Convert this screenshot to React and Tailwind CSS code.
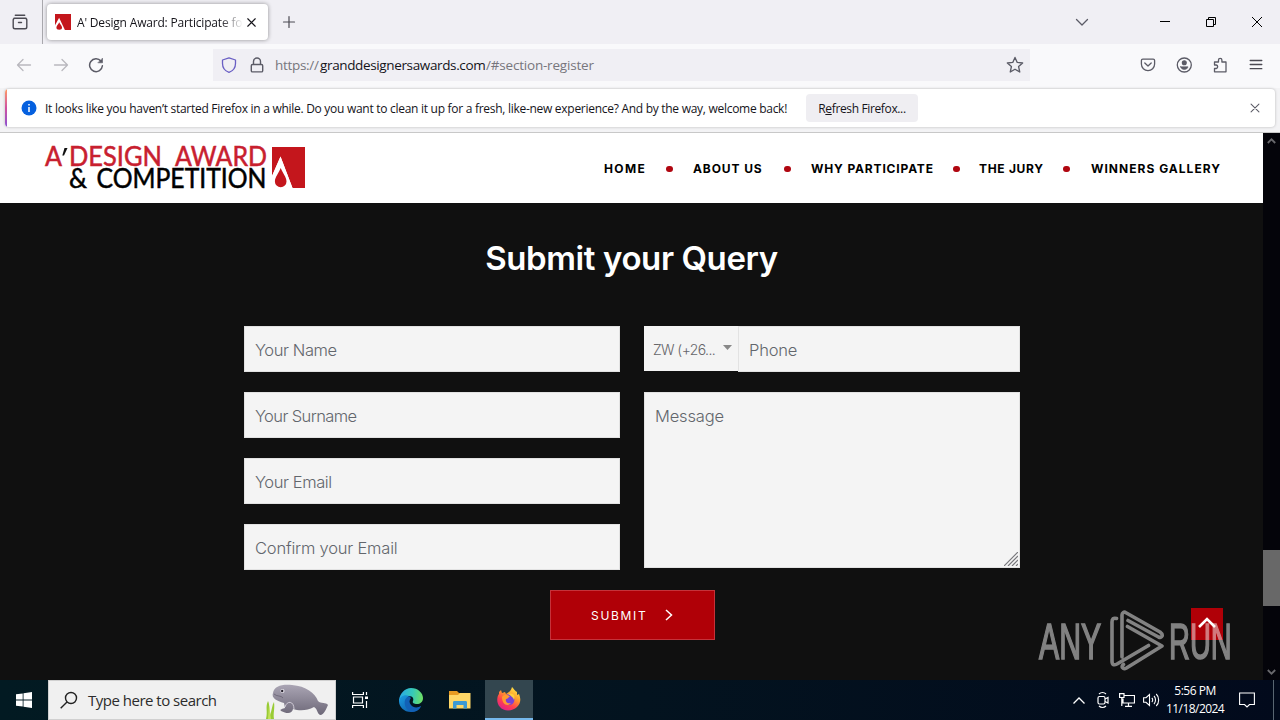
import React from "react";

const ui = "font-['Open_Sans','Noto_Sans',sans-serif]";

function Icon({ className = "", size = 16, w = 1.3, children }) {
  return (
    <svg className={`shrink-0 ${className}`} width={size} height={size} viewBox="0 0 16 16" fill="none" stroke="currentColor" strokeWidth={w} strokeLinecap="round" strokeLinejoin="round">
      {children}
    </svg>
  );
}

function AwardMark({ className }) {
  return (
    <svg className={className} viewBox="0 0 33 41" preserveAspectRatio="none">
      <path d="M0 0H33V41H20.500L8.500 9.500L0 29Z" fill="#c4161c" />
      <path d="M8.500 9.500L20.500 41H0V29Z" fill="#fff" />
      <path d="M8.700 21C10.500 26 14.500 30 14.500 34.500A5.800 5.800 0 0 1 2.900 34.500C2.900 30 6.900 26 8.700 21Z" fill="#c4161c" />
    </svg>
  );
}

function TabBar() {
  return (
    <div className="flex h-11 items-start bg-[#f0eff4] text-[#15141a]">
      <div className="flex h-11 w-[43px] items-center border-r border-[#a9a8ad] pl-3">
        <Icon size={16} w={1.4} className="text-[#4b4a52]">
          <path d="M3.300 1.200H12.700M2 4.300H14M1.200 6V13C1.200 14 2 14.800 3 14.800H13C14 14.800 14.800 14 14.800 13V6C14.800 5 14 4.200 13 4.200H3C2 4.200 1.200 5 1.200 6ZM6.500 8.500H9.500" />
        </Icon>
      </div>
      <div className="mt-1 ml-1 flex h-9 w-[221px] items-center rounded bg-white pl-2 shadow-[0_0_4px_rgba(0,0,0,0.4)]">
        <div className="flex h-4 w-4 shrink-0 bg-[#b5000d]">
          <AwardMark className="h-4 w-4" />
        </div>
        <div className="mt-px ml-[6px] w-[166px] overflow-hidden text-xs tracking-[-0.18px] whitespace-nowrap [mask-image:linear-gradient(to_right,#000_86%,transparent)]">
          A&apos; Design Award: Participate for
        </div>
        <Icon size={15} w={1.2} className="ml-px"><path d="M4 4L12 12M12 4L4 12" /></Icon>
      </div>
      <Icon size={16} w={1.2} className="mt-[14px] ml-[13px] text-[#4b4a52]"><path d="M8 2.500V13.500M2.500 8H13.500" /></Icon>
      <div className="ml-auto flex h-11 items-center">
        <Icon size={16} w={1.3} className="mr-[70px] text-[#5b5b66]"><path d="M2.500 5.500L8 11L13.500 5.500" /></Icon>
        <svg className="mr-9 h-[10px] w-[10px]" viewBox="0 0 10 10" stroke="#000"><path d="M0 4.500H10" /></svg>
        <svg className="mr-9 h-[10px] w-[10px]" viewBox="0 0 10 10" fill="none" stroke="#000"><path d="M.5 2.500H7.500V9.500H.5ZM2.500 2.500V.5H9.500V7.500H7.500" /></svg>
        <svg className="mr-[18px] h-[10px] w-[10px]" viewBox="0 0 10 10" fill="none" stroke="#000"><path d="M0 0L10 10M10 0L0 10" /></svg>
      </div>
    </div>
  );
}

function AddressBar() {
  return (
    <div className="flex h-11 items-center bg-[#f9f9fb] pb-[2px] text-[#5b5b66]">
      <Icon className="ml-4 text-[#b9b8be]"><path d="M1.500 8H14.500M7 2.500L1.500 8L7 13.500" /></Icon>
      <Icon className="ml-[21px] text-[#b9b8be]"><path d="M1.500 8H14.500M9 2.500L14.500 8L9 13.500" /></Icon>
      <Icon className="ml-[19px]" w={1.500}>
        <path d="M13 4.200A6.400 6.400 0 1 0 14.400 8.800" />
        <path d="M14.500 1.500V5.800H10.200Z" fill="currentColor" strokeWidth=".6" />
      </Icon>
      <div className="ml-[109px] flex h-8 w-[817px] items-center bg-[#f0eff4]">
        <Icon size={16} w={1.300} className="ml-2 text-[#6a5fc4]">
          <path d="M8 .8L14.500 3V6.500C14.500 10.500 12 13.900 8 15.300C4 13.900 1.500 10.500 1.500 6.500V3Z" />
        </Icon>
        <Icon size={16} w={1.400} className="ml-3">
          <path d="M3.500 7.500H12.500C13.200 7.500 13.700 8 13.700 8.700V13.700C13.700 14.400 13.200 14.900 12.500 14.900H3.500C2.800 14.900 2.300 14.400 2.300 13.700V8.700C2.300 8 2.800 7.500 3.500 7.500ZM4.500 7.300V4.500A3.500 3.500 0 0 1 11.500 4.500V7.300" />
        </Icon>
        <div className={`ml-[10px] flex text-[13.500px] whitespace-nowrap text-[#77767d] ${ui}`}>
          <span className="w-[45px] tracking-[-0.3px]">https://</span>
          <span className="w-[166px] tracking-[-0.36px] text-[#15141a]">granddesignersawards.com</span>
          <span className="tracking-[-0.2px]">/#section-register</span>
        </div>
        <Icon size={18} w={1.200} className="mr-[6px] ml-auto">
          <path d="M8 1.300L10 5.700L14.800 6.200L11.200 9.400L12.200 14.200L8 11.800L3.800 14.200L4.800 9.400L1.200 6.200L6 5.700Z" />
        </Icon>
      </div>
      <div className="mr-4 ml-auto flex items-center gap-5">
        <Icon><path d="M2.800 2.200H13.200C14 2.200 14.600 2.800 14.600 3.600V7A6.600 6.600 0 0 1 1.400 7V3.600C1.400 2.800 2 2.200 2.800 2.200ZM4.800 6L8 9L11.200 6" /></Icon>
        <Icon>
          <circle cx="8.300" cy="8" r="7" />
          <circle cx="8.300" cy="5.700" r="1.900" fill="currentColor" />
          <path d="M4.600 9.800H12C11.600 11.600 10.100 12.500 8.300 12.500S5 11.600 4.600 9.800Z" fill="currentColor" strokeWidth=".6" />
        </Icon>
        <Icon><path d="M2.500 5H6.500V3A1.700 1.700 0 0 1 9.900 3V5H14V14.800H2.500V11.500H4.300A1.800 1.800 0 0 0 4.300 8H2.500Z" /></Icon>
        <Icon className="text-[#4b4a52]"><path d="M2.200 3.500H13.800M2.200 7.500H13.800M2.200 11.700H13.800" /></Icon>
      </div>
    </div>
  );
}

function Notification() {
  return (
    <div className="h-[45px] border-b border-[#c8c8c8] bg-[#f3f3f5] px-[5px] pt-px">
      <div className="flex h-[38px] items-center overflow-hidden rounded bg-white shadow-[0_0_3px_rgba(0,0,0,0.25)]">
        <div className="h-full w-[2px] bg-gradient-to-b from-[#ff9a5c] via-[#d04fa0] to-[#8a4fd0]" />
        <svg className="ml-[14px] h-4 w-4" viewBox="0 0 16 16">
          <circle cx="8" cy="8" r="7.500" fill="#0560df" />
          <path d="M8 7V12M8 4V5.500" stroke="#fff" strokeWidth="1.500" />
        </svg>
        <div className={`mt-[2px] ml-2 w-[761px] text-xs tracking-[-0.282px] whitespace-nowrap text-[#15141a] ${ui}`}>
          It looks like you haven’t started Firefox in a while. Do you want to clean it up for a fresh, like-new experience? And by the way, welcome back!
        </div>
        <button className={`flex h-7 w-28 items-center justify-center rounded bg-[#efeef2] pt-[2px] text-xs tracking-[-0.36px] whitespace-nowrap text-[#15141a] ${ui}`}>
          R<span className="underline">e</span>fresh Firefox...
        </button>
        <Icon size={14} w={1.200} className="mr-[13px] ml-auto text-[#5b5b66]"><path d="M3.500 3.500L12.500 12.500M12.500 3.500L3.500 12.500" /></Icon>
      </div>
    </div>
  );
}

function Logo() {
  return (
    <div className="ml-[44px] flex items-start">
      <svg className="overflow-visible" width="223" height="46" viewBox="0 0 223 46" fontFamily="Lato, sans-serif" fontSize="26" strokeWidth=".5">
        <g fill="#c8202f" stroke="#c8202f">
          <text x="1" y="19" textLength="17" lengthAdjust="spacingAndGlyphs">A</text>
          <text x="25" y="19" textLength="93" lengthAdjust="spacingAndGlyphs">DESIGN</text>
          <text x="131" y="19" textLength="92" lengthAdjust="spacingAndGlyphs">AWARD</text>
        </g>
        <path d="M20.500 1H23.500L20 8.500H18.300Z" fill="#111" />
        <g fill="#000" stroke="#000">
          <text x="25" y="41" textLength="18" lengthAdjust="spacingAndGlyphs">&amp;</text>
          <text x="52.500" y="41" textLength="170" lengthAdjust="spacingAndGlyphs">COMPETITION</text>
        </g>
      </svg>
      <AwardMark className="ml-[5px] h-[41px] w-[33px]" />
    </div>
  );
}

const Dot = ({ className }) => <span className={`h-[6px] w-[7px] shrink-0 rounded-full bg-[#b00610] ${className}`} />;

function SiteHeader() {
  return (
    <header className="flex h-[70px] bg-white pt-[14px]">
      <Logo />
      <nav className="ml-[299px] flex h-11 items-center text-xs font-bold whitespace-nowrap text-black">
        <span className="w-[43px] tracking-[1.400px]">HOME</span>
        <Dot className="mx-[19px]" />
        <span className="ml-px w-[71px] tracking-[0.900px]">ABOUT US</span>
        <Dot className="ml-5" />
        <span className="ml-5 w-[122px] tracking-[0.840px]">WHY PARTICIPATE</span>
        <Dot className="ml-5" />
        <span className="ml-[19px] w-[63px] tracking-[0.700px]">THE JURY</span>
        <Dot className="ml-[21px]" />
        <span className="ml-[21px] tracking-[1.020px]">WINNERS GALLERY</span>
      </nav>
    </header>
  );
}

const field = "h-[46px] w-full border border-[#e2e2e2] bg-[#f4f4f4] px-[10px] pt-[2px] text-[16.500px] font-light placeholder-[#62666c]";

function QueryForm() {
  return (
    <main className="h-[477px] bg-[#101010] pt-[34px]">
      <h1 className="text-center text-[33px] leading-[42px] font-semibold tracking-[-0.4px] text-white">Submit your Query</h1>
      <div className="mt-[47px] ml-[244px] grid w-[776px] grid-cols-2 gap-6">
        <div className="flex flex-col gap-5">
          <input className={`tracking-[-0.400px] ${field}`} placeholder="Your Name" />
          <input className={`tracking-[-0.600px] ${field}`} placeholder="Your Surname" />
          <input className={`tracking-[-0.400px] ${field}`} placeholder="Your Email" />
          <input className={`tracking-[-0.200px] ${field}`} placeholder="Confirm your Email" />
        </div>
        <div className="flex flex-col gap-5">
          <div className="flex h-[46px]">
            <div className="flex h-[45px] w-[94px] shrink-0 items-center bg-[#f4f4f4] pt-[2px] pl-[9px] text-[14px] font-light tracking-[-0.600px] text-[#66666a]">
              <span className="w-[70px] whitespace-nowrap">ZW (+26...</span>
              <svg className="mb-[4px] h-[5px] w-[9px]" viewBox="0 0 9 5"><path d="M0 0H9L4.500 5Z" fill="#888" /></svg>
            </div>
            <input className={`min-w-0 flex-1 tracking-[-0.200px] ${field}`} placeholder="Phone" />
          </div>
          <div className="flex h-44 items-end border border-[#e2e2e2] bg-[#f4f4f4]">
            <textarea className="h-full flex-1 resize-none bg-transparent px-[10px] pt-[11px] text-[16.500px] font-light tracking-[-0.150px] placeholder-[#62666c]" placeholder="Message" />
            <svg className="mr-px mb-px -ml-[15px] h-[14px] w-[14px]" viewBox="0 0 14 14" stroke="#77777b" strokeWidth="1.200"><path d="M0 14L14 0M4 14L14 4M8 14L14 8M12 14L14 12" /></svg>
          </div>
        </div>
      </div>
      <button className="mt-5 ml-[550px] flex h-[50px] w-[165px] items-center border border-[#c5323a] bg-[#b00007] pl-10 text-xs tracking-[1.700px] text-white">
        <span className="mt-[2px] w-[71px] text-left">SUBMIT</span>
        <svg className="ml-[3px] h-3 w-2" viewBox="0 0 8 12" fill="none" stroke="#fff" strokeWidth="1.500"><path d="M1 1L6.500 6L1 11" /></svg>
      </button>
    </main>
  );
}

function ScrollBar() {
  return (
    <div className="flex h-[547px] w-[17px] flex-col items-center bg-[#04040a]">
      <svg className="mt-[5px] h-[6px] w-[9px]" viewBox="0 0 9 6" fill="none" stroke="#68686c" strokeWidth="1.800"><path d="M.8 5L4.500 1.300L8.200 5" /></svg>
      <div className="mt-[406px] h-[56px] w-full bg-[#686868]" />
      <svg className="mt-[63px] h-[6px] w-[9px]" viewBox="0 0 9 6" fill="none" stroke="#68686c" strokeWidth="1.800"><path d="M.8 1L4.500 4.700L8.200 1" /></svg>
    </div>
  );
}

function Watermark() {
  return (
    <div className="absolute top-[604px] left-[1036px] h-[72px] w-[200px]">
      <div className="absolute top-1 left-[155px] flex h-8 w-8 items-center justify-center bg-[#b00007]">
        <svg className="mt-[-4px] h-[11px] w-[18px]" viewBox="0 0 18 11" fill="none" stroke="#fff" strokeWidth="2.600"><path d="M1 10L9 2L17 10" /></svg>
      </div>
      <svg className="absolute inset-0 overflow-visible opacity-50" width="200" height="72" viewBox="0 0 200 72" fill="none" stroke="#f4f4f4">
        <g fontFamily="'Liberation Sans', sans-serif" fontSize="50" fill="#f4f4f4" strokeWidth="1.600">
          <text transform="translate(3 54.500) scale(.56 1)" textLength="111" lengthAdjust="spacingAndGlyphs">ANY</text>
          <text transform="translate(133 54.500) scale(.56 1)" textLength="112" lengthAdjust="spacingAndGlyphs">RUN</text>
        </g>
        <path strokeWidth="3.600" strokeLinejoin="round" strokeLinecap="round" d="M80.500 14.500C77.500 13.500 76 15 76 18V57C76 61 78 61.500 81 60L112.500 41.500M86 53V11C86 8.500 88 7.500 90 8.700L124 28C128 31 126 34.500 122.500 33L92 16.500M91.500 22.500L126 42L90.500 64C87 66 84.500 62.500 87.500 60.500M86 48V22" />
      </svg>
    </div>
  );
}

function Manatee() {
  return (
    <svg className="h-[38px] w-[64px]" viewBox="0 0 64 38">
      <defs>
        <linearGradient id="skin" x1="0" y1="0" x2="0" y2="1"><stop stopColor="#aaa5b4" /><stop offset="1" stopColor="#6d6878" /></linearGradient>
      </defs>
      <path d="M1 38C3 30 0 26 3 20C5 24 4 30 5 34C7 29 7 24 9 21C10 28 8 32 9 38Z" fill="#98cb35" />
      <path d="M3 38L4 24L6 38Z" fill="#c4e25a" />
      <path d="M8 12C9 5 17 3 27 4C41 5 50 12 53 20C56 23 61 21 63 24C61 28 60 32 56 34C52 34 53 28 49 26C42 30 34 30 28 28C27 33 22 33 16 30C14 28 18 28 20 27L19 22C12 20 6 17 8 12Z" fill="url(#skin)" />
      <path d="M20 26C22 19 29 20 29 28" fill="none" stroke="#d1ccd8" strokeWidth="1" />
      <circle cx="17.500" cy="10" r="2" fill="#e9e6ed" /><circle cx="17.200" cy="10" r="1.200" fill="#26222d" />
      <path d="M9 13C12 16 16 14 18 17" fill="none" stroke="#625c6d" strokeWidth=".7" />
    </svg>
  );
}

function EdgeIcon() {
  return (
    <svg className="h-6 w-6" viewBox="0 0 24 24">
      <defs>
        <linearGradient id="edgeTop" x1="0" y1=".4" x2="1" y2=".5"><stop stopColor="#2aa9e8" /><stop offset=".55" stopColor="#36c9b8" /><stop offset="1" stopColor="#6fe063" /></linearGradient>
        <linearGradient id="edgeLow" x1="0" y1="0" x2="1" y2="1"><stop stopColor="#1b9de2" /><stop offset="1" stopColor="#0b4f9e" /></linearGradient>
      </defs>
      <path d="M0 12C1 5 6 0 12 0C19 0 24 5 24 10C24 14 21 16 18 16C15 16 13 15 14 13C15 11 14 8 10 8C6 8 3 10 0 14Z" fill="url(#edgeTop)" />
      <path d="M0 13C1 8 6 6 10 8C7 9 7 18 14 20C17 21 20 20 22 18C20 22 16 24 12 24C5 24 0 19 0 13Z" fill="url(#edgeLow)" />
      <path d="M10 8C3 11 5 21 12 24C18 24 21 21 22 18C19 20 14 20 12 17C10 15 10 12 12 10Z" fill="#1261b6" />
    </svg>
  );
}

function FolderIcon() {
  return (
    <svg className="h-5 w-[22px]" viewBox="0 0 22 20">
      <path d="M0 1H8L10 3H21V8H0Z" fill="#e79b22" />
      <path d="M0 5H9L11 3H21.500V18.500H0Z" fill="#ffd767" />
      <path d="M4 18.500V12.500C4 11.500 4.500 11 5.500 11H16.500C17.500 11 18 11.500 18 12.500V18.500H14.500V15H7.500V18.500Z" fill="#3d9ad5" />
    </svg>
  );
}

function FirefoxIcon() {
  return (
    <svg className="h-6 w-6" viewBox="0 0 24 24">
      <defs>
        <linearGradient id="fire" x1=".85" y1="0" x2=".25" y2="1"><stop stopColor="#fff04a" /><stop offset=".4" stopColor="#ff9a2b" /><stop offset=".7" stopColor="#ff3f50" /><stop offset="1" stopColor="#e0208a" /></linearGradient>
      </defs>
      <path d="M4 3L5 6L8 5L9 7C12 5 14 4 15 0C18 3 18 4 20 5V8L22 7C24 12 24 16 20 20C15 25 6 24 3 20C-1 16 0 9 2 7V5Z" fill="url(#fire)" />
      <circle cx="12" cy="12.500" r="5.500" fill="#7842d5" />
      <path d="M5 10C7 7 11 7 13 10C11 10 11 12 9 12C8 15 11 17 14 16C11 20 5 18 5 10Z" fill="#ff9b2e" />
      <path d="M11 7C16 5 19 9 17 13C16 10 14 9 11 7Z" fill="#ffcf3c" />
    </svg>
  );
}

function TaskBar() {
  return (
    <div className={`flex h-10 bg-linear-to-r from-[#021a22] via-[#03131f] to-[#020a1c] text-white ${ui}`}>
      <div className="flex w-12 items-center pl-4">
        <svg className="h-4 w-4" viewBox="0 0 16 16" fill="#fff"><path d="M0 2.300L6.700 1.400V7.500H0ZM7.500 1.300L16 0V7.500H7.500ZM0 8.400H6.700V14.600L0 13.700ZM7.500 8.400H16V16L7.500 14.700Z" /></svg>
      </div>
      <div className="flex w-72 items-center border border-[#d0d0d0] bg-[#f0f0f0] text-[#2c2c2c]">
        <svg className="ml-[11px] h-[18px] w-[18px]" viewBox="0 0 18 18" fill="none" stroke="#222" strokeWidth="1.400"><circle cx="11" cy="7" r="5.500" /><path d="M7 11L.7 17.300" /></svg>
        <span className="ml-[10px] w-[177px] text-[15px] tracking-[-0.5px] whitespace-nowrap">Type here to search</span>
        <Manatee />
      </div>
      <div className="flex w-12 items-center justify-center">
        <svg className="h-4 w-[17px]" viewBox="0 0 17 16" fill="none" stroke="#fff" strokeWidth="1.200"><path d="M.6 0V2.500H11.400V0M.6 16V13.500H11.400V16M1.500 5H10.500V11H1.500ZM14.500 0V3M14.500 9V16" /><path d="M13 4.500H16V7H13Z" fill="#fff" stroke="none" /></svg>
      </div>
      <div className="ml-px flex w-[51px] items-center justify-center"><EdgeIcon /></div>
      <div className="flex w-[47px] items-center justify-center"><FolderIcon /></div>
      <div className="ml-[2px] flex w-12 items-center justify-center border-b-2 border-[#76b9ed] bg-[#33464f]"><FirefoxIcon /></div>
      <div className="ml-auto flex items-center">
        <svg className="mr-3 h-[7px] w-3" viewBox="0 0 12 7" fill="none" stroke="#fff" strokeWidth="1.300"><path d="M.5 6.500L6 1L11.500 6.500" /></svg>
        <svg className="mr-[10px] h-4 w-3" viewBox="0 0 12 16" fill="none" stroke="#fff" strokeWidth="1.200"><rect x="1" y="4.500" width="7" height="7.500" rx="1.500" /><path d="M8 7L11 5.500V11L8 9.500M2 2C4 .2 7 .2 9 2M2 14C4 15.800 7 15.800 9 14" /></svg>
        <svg className="mr-2 h-[14px] w-4" viewBox="0 0 16 14" fill="none" stroke="#fff" strokeWidth="1.200"><path d="M5.500 2.500H15.500V10H4V5.500M9.500 10V13M6 13.400H13M.6 .6H5V4.500H.6ZM2.800 4.500V13" /></svg>
        <svg className="mr-[6px] h-[14px] w-[17px]" viewBox="0 0 17 14" fill="none" stroke="#fff" strokeWidth="1.100"><path d="M.6 4.700H3L6.500 1.500V12.500L3 9.300H.6ZM8.800 5C10 6 10 8 8.800 9M11 3C13 5 13 9 11 11M13.200 1C16.500 4 16.500 10 13.200 13" /></svg>
        <div className="w-[58px] text-center text-xs leading-[18px] tracking-[-0.5px] whitespace-nowrap">
          <div>5:56 PM</div>
          <div className="tracking-[-0.560px]">11/18/2024</div>
        </div>
        <svg className="mr-[18px] ml-[15px] h-4 w-4" viewBox="0 0 16 16" fill="none" stroke="#fff" strokeWidth="1.100"><path d="M.6 1H15.400V12.500H10.500L8 15L5.500 12.500H.6Z" /></svg>
        <div className="mr-[6px] h-10 w-px bg-[#596672]" />
      </div>
    </div>
  );
}

export default function App() {
  return (
    <div className="relative h-[720px] w-[1280px] overflow-hidden bg-[#101010] font-[Inter,sans-serif]">
      <div className={ui}>
        <TabBar />
        <AddressBar />
        <Notification />
      </div>
      <div className="flex">
        <div className="w-[1263px]">
          <SiteHeader />
          <QueryForm />
        </div>
        <ScrollBar />
      </div>
      <TaskBar />
      <Watermark />
    </div>
  );
}
